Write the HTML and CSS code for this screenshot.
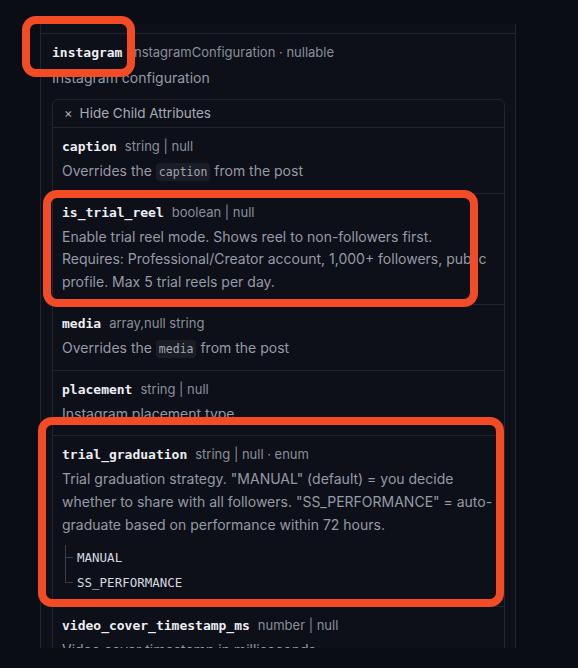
FILE: index.html
```html
<!DOCTYPE html>
<html lang="en">
<head>
<meta charset="utf-8">
<title>Instagram configuration</title>
<link rel="stylesheet" href="styles.css">
</head>
<body>
<div class="page">
  <div class="panel">
    <div class="prev"></div>
    <div class="item">
      <div class="head"><span class="name">instagram</span><span class="type">InstagramConfiguration · nullable</span></div>
      <p class="desc">Instagram configuration</p>
      <div class="children">
        <div class="toggle"><span class="x">×</span><span>Hide Child Attributes</span></div>
        <div class="row">
          <div class="head"><span class="name">caption</span><span class="type">string | null</span></div>
          <p class="desc">Overrides the <code>caption</code> from the post</p>
        </div>
        <div class="row">
          <div class="head"><span class="name">is_trial_reel</span><span class="type">boolean | null</span></div>
          <p class="desc">Enable trial reel mode. Shows reel to non-followers first.<br>Requires: Professional/Creator account, 1,000+ followers, public profile. Max 5 trial reels per day.</p>
        </div>
        <div class="row">
          <div class="head"><span class="name">media</span><span class="type">array,null string</span></div>
          <p class="desc">Overrides the <code>media</code> from the post</p>
        </div>
        <div class="row">
          <div class="head"><span class="name">placement</span><span class="type">string | null</span></div>
          <p class="desc">Instagram placement type</p>
        </div>
        <div class="row">
          <div class="head"><span class="name">trial_graduation</span><span class="type">string | null · enum</span></div>
          <p class="desc">Trial graduation strategy. "MANUAL" (default) = you decide whether to share with all followers. "SS_PERFORMANCE" = auto-graduate based on performance within 72 hours.</p>
          <ul class="enum">
            <li>MANUAL</li>
            <li>SS_PERFORMANCE</li>
          </ul>
        </div>
        <div class="row">
          <div class="head"><span class="name">video_cover_timestamp_ms</span><span class="type">number | null</span></div>
          <p class="desc">Video cover timestamp in milliseconds</p>
        </div>
      </div>
    </div>
  </div>
</div>
<div class="mark mark-name"></div>
<div class="mark mark-reel"></div>
<div class="mark mark-grad"></div>
</body>
</html>
```
FILE: styles.css
```css
html, body {
  margin: 0;
  padding: 0;
  background: #0a0d14;
}
body {
  width: 578px;
  height: 668px;
  overflow: hidden;
  position: relative;
  font-family: "Inter", "Liberation Sans", sans-serif;
}
.page {
  padding: 24px 0 0 40px;
}
.panel {
  width: 474px;
  height: 624px;
  overflow: hidden;
  border-left: 1px solid #22252e;
  border-right: 1px solid #22252e;
  background: #0d1018;
}
.prev {
  height: 9px;
}
.item {
  border-top: 1px solid #22252e;
  padding: 10px 10px 0 11px;
}
.head {
  display: flex;
  align-items: baseline;
  gap: 8px;
  height: 16px;
  line-height: 16px;
  white-space: nowrap;
}
.name {
  font-family: "DejaVu Sans Mono", "Liberation Mono", monospace;
  font-weight: bold;
  font-size: 13px;
  color: #eceef3;
}
.type {
  font-size: 13px;
  color: #8a8f9b;
}
.desc {
  margin: 0;
  font-size: 14px;
  line-height: 22.75px;
  color: #969aa6;
}
.item > .desc {
  margin-top: 7px;
}
code {
  font-family: "DejaVu Sans Mono", "Liberation Mono", monospace;
  font-size: 11.5px;
  line-height: 1;
  color: #a3a7b2;
  background: #1a1d26;
  border-radius: 4px;
  padding: 2px 3px;
}
.children {
  margin-top: 9px;
  border: 1px solid #22252e;
  border-radius: 6px 6px 0 0;
}
.toggle {
  display: flex;
  align-items: center;
  gap: 7px;
  height: 17px;
  padding: 5px 10px 5px 11px;
  line-height: 17px;
  font-size: 13.5px;
  color: #a7abb6;
}
.toggle .x {
  font-size: 13px;
  color: #a7abb6;
}
.row {
  border-top: 1px solid #22252e;
  padding: 10px 9px 10px 9px;
}
.row .desc {
  margin-top: 6px;
}
.enum {
  list-style: none;
  margin: 8px 0 1px 3px;
  padding: 0;
}
.enum li {
  position: relative;
  padding-left: 12px;
  height: 25px;
  line-height: 25px;
  font-family: "DejaVu Sans Mono", "Liberation Mono", monospace;
  font-size: 12.5px;
  color: #d6d9e0;
}
.enum li::before {
  content: "";
  position: absolute;
  left: 0;
  top: 0;
  width: 1px;
  height: 100%;
  background: #3a3e4a;
}
.enum li:last-child::before {
  height: 13px;
}
.enum li::after {
  content: "";
  position: absolute;
  left: 0;
  top: 12px;
  width: 8px;
  height: 1px;
  background: #3a3e4a;
}
.mark {
  position: absolute;
  border: 8px solid #f24b26;
  border-radius: 14px;
  box-sizing: border-box;
}
.mark-name {
  left: 22px;
  top: 16px;
  width: 113px;
  height: 61px;
}
.mark-reel {
  left: 43px;
  top: 190px;
  width: 435px;
  height: 117px;
}
.mark-grad {
  left: 38px;
  top: 417px;
  width: 466px;
  height: 190px;
}
```
